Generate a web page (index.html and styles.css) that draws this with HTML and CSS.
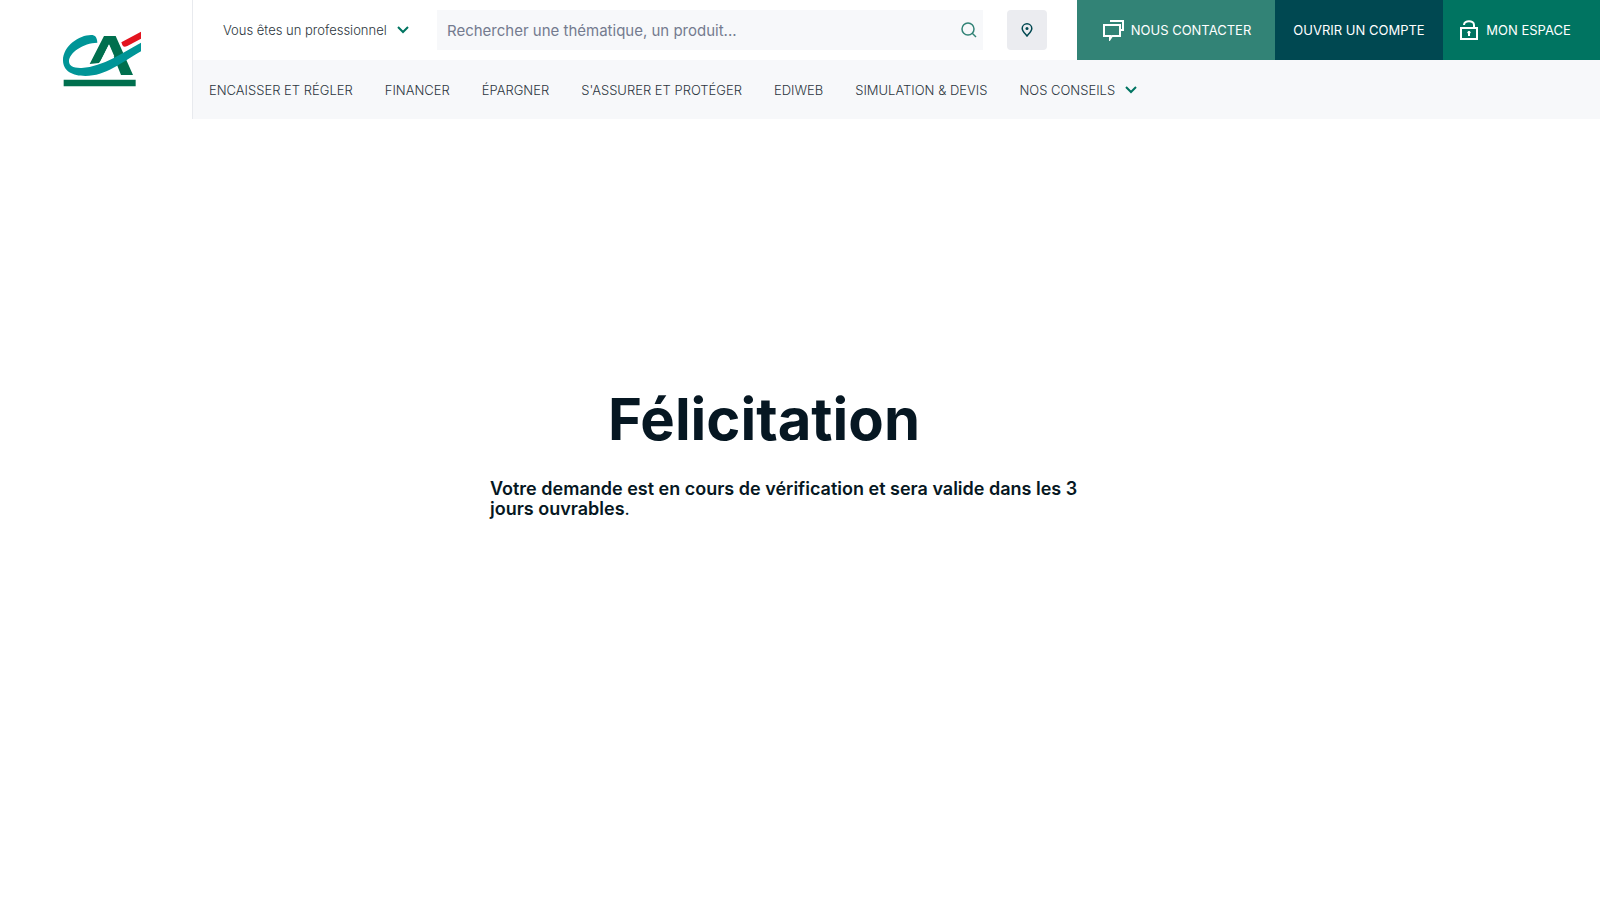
FILE: index.html
```html
<!DOCTYPE html>
<html lang="fr">
<head>
<meta charset="utf-8">
<meta name="viewport" content="width=device-width, initial-scale=1">
<title>Félicitation</title>
<link rel="stylesheet" href="styles.css">
</head>
<body>
<header class="header">
  <a class="logo" href="#" aria-label="Accueil">
    <svg class="logo-mark" viewBox="66 63 240 168" aria-hidden="true">
      <path fill="#006f4e" d="M192 78H227L279 195H243L207 104L182 152Q179 160 170 160L149 162Z"/>
      <path fill="#fff" d="M207 103L223 139L178 161Z"/>
      <path fill="#009597" d="M172 98C171 82 166 75 153 75C118 75 69 108 69 151C69 184 98 198 136 198C198 198 240 160 303 124V98C250 127 190 169 125 174C100 175 87 168 87 154C87 128 130 99 172 98Z"/>
      <path fill="#e3141f" d="M244 97L303 65V86L262 108Q250 114 247 105Z"/>
      <path fill="#006f4e" d="M71 209H287V229H71Z"/>
    </svg>
  </a>
  <div class="header-main">
    <div class="topbar">
      <button class="profile" type="button">Vous êtes un professionnel
        <svg class="chevron" viewBox="0 0 12 8" aria-hidden="true"><path d="M1 1L6 6L11 1"/></svg>
      </button>
      <form class="search" role="search">
        <input class="search-input" type="text" aria-label="Rechercher" placeholder="Rechercher une thématique, un produit...">
        <button class="search-button" type="button" aria-label="Lancer la recherche">
          <svg class="search-icon" viewBox="0 0 16 16" aria-hidden="true"><circle cx="7" cy="7" r="6"/><path d="M11 11L15 15"/></svg>
        </button>
      </form>
      <button class="locate" type="button" aria-label="Trouver une agence">
        <svg class="pin" viewBox="0 0 12 14" aria-hidden="true"><path d="M6 13C4 10.500 1.200 8 1.200 5.500A4.800 4.700 0 0 1 10.800 5.500C10.800 8 8 10.500 6 13Z"/><circle cx="6" cy="5.500" r="1.500"/></svg>
      </button>
      <a class="action contact" href="#">
        <svg class="chat" viewBox="0 0 22 21" aria-hidden="true"><path d="M7 1H20V10H18M1 5H17V16H9L7 19V16H1Z"/></svg>
        NOUS CONTACTER
      </a>
      <a class="action account" href="#">OUVRIR UN COMPTE</a>
      <a class="action space" href="#">
        <svg class="lock" viewBox="0 0 18 21" aria-hidden="true"><path d="M1 8H17V19H1ZM4 5C4 0 14 0 14 5V8"/><circle cx="9" cy="12.500" r="1.200"/><path d="M9 13V16"/></svg>
        MON ESPACE
      </a>
    </div>
    <nav class="nav" aria-label="Navigation principale">
      <a href="#">ENCAISSER ET RÉGLER</a>
      <a href="#">FINANCER</a>
      <a href="#">ÉPARGNER</a>
      <a href="#">S'ASSURER ET PROTÉGER</a>
      <a href="#">EDIWEB</a>
      <a href="#">SIMULATION &amp; DEVIS</a>
      <a class="nav-more" href="#">NOS CONSEILS
        <svg class="chevron" viewBox="0 0 12 8" aria-hidden="true"><path d="M1 1L6 6L11 1"/></svg>
      </a>
    </nav>
  </div>
</header>
<main class="message">
  <h1 class="title">Félicitation</h1>
  <p class="text"><strong>Votre demande est en cours de vérification et sera valide dans les 3 jours ouvrables</strong>.</p>
</main>
</body>
</html>
```
FILE: styles.css
```css
* {
  box-sizing: border-box;
}

body {
  margin: 0;
  background: #fff;
  color: #061722;
  font-family: Inter, "Open Sans", sans-serif;
}

a {
  color: inherit;
  text-decoration: none;
}

button {
  border: 0;
  padding: 0;
  background: none;
  color: inherit;
  font: inherit;
  cursor: pointer;
}

svg {
  flex: none;
  fill: none;
}

.header {
  display: flex;
}

.logo {
  flex: none;
  width: 193px;
  padding: 31px 0 0 62px;
  border-right: 1px solid #e8eaee;
}

.logo-mark {
  display: block;
  width: 80px;
  height: 56px;
}

.header-main {
  flex: 1;
  min-width: 0;
}

.topbar {
  display: flex;
  align-items: center;
  height: 60px;
}

.profile {
  display: flex;
  align-items: center;
  justify-content: space-between;
  width: 186px;
  margin: 0 28px 0 30px;
  color: #2c3640;
  font-size: 13px;
  font-weight: 300;
  white-space: nowrap;
}

.chevron {
  width: 12px;
  height: 8px;
  stroke: #007461;
  stroke-width: 2;
}

.search {
  display: flex;
  flex: 1;
  align-items: center;
  height: 40px;
  padding: 0 6px 0 10px;
  background: #f7f8fa;
}

.search-input {
  flex: 1;
  min-width: 0;
  height: 40px;
  border: 0;
  padding: 0;
  background: none;
  color: #061722;
  font: 15px Inter, "Open Sans", sans-serif;
}

.search-input::placeholder {
  color: #747b8f;
  opacity: 1;
}

.search-icon {
  display: block;
  width: 16px;
  height: 16px;
  stroke: #328376;
  stroke-width: 1.5;
}

.locate {
  display: flex;
  flex: none;
  align-items: center;
  justify-content: center;
  width: 40px;
  height: 40px;
  margin: 0 30px 0 24px;
  border-radius: 4px;
  background: #ebecf0;
}

.pin {
  width: 12px;
  height: 14px;
  stroke: #004851;
  stroke-width: 1.5;
}

.pin circle {
  fill: #004851;
  stroke: none;
}

.action {
  display: flex;
  flex: none;
  align-items: center;
  justify-content: center;
  height: 60px;
  color: #fff;
  font-size: 13px;
  white-space: nowrap;
}

.contact {
  gap: 6px;
  width: 198px;
  padding-left: 2px;
  background: #328376;
}

.account {
  width: 168px;
  background: #004851;
}

.space {
  gap: 8px;
  width: 157px;
  padding-right: 12px;
  background: #007461;
}

.chat,
.lock {
  stroke: #fff;
  stroke-width: 2;
}

.chat {
  width: 22px;
  height: 21px;
}

.lock {
  width: 18px;
  height: 21px;
}

.lock circle {
  fill: #fff;
  stroke-width: 1;
}

.nav {
  display: flex;
  align-items: center;
  gap: 32px;
  height: 59px;
  padding-left: 16px;
  background: #f7f8fa;
  color: #2c3640;
  font-size: 13px;
  font-weight: 300;
  white-space: nowrap;
}

.nav-more {
  display: flex;
  align-items: center;
  gap: 10px;
}

.message {
  max-width: 620px;
  margin: 266px auto 0;
}

.title {
  margin: 0;
  padding-right: 72px;
  font-size: 58px;
  line-height: 68px;
  text-align: center;
}

.text {
  margin: 26px 0 0;
  font-size: 18px;
  line-height: 20px;
}

.text strong {
  font-weight: 600;
}
```
